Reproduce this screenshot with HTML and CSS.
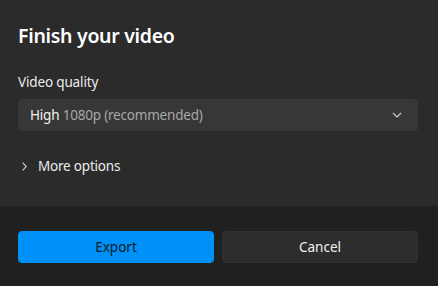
FILE: index.html
```html
<!DOCTYPE html>
<html lang="en">
<head>
    <meta charset="UTF-8">
    <title>Finish your video</title>
    <link rel="stylesheet" href="styles.css">
</head>
<body>
    <div class="dialog">
        <div class="content">
            <h1>Finish your video</h1>
            <label class="field-label">Video quality</label>
            <div class="select">
                <span><span class="strong">High</span> <span class="muted">1080p (recommended)</span></span>
                <svg class="chev-down" width="10" height="6" viewBox="0 0 10 6"><path d="M1 1l4 4 4-4" fill="none" stroke="#cfcfcf" stroke-width="1.1"/></svg>
            </div>
            <div class="more">
                <svg width="5" height="9" viewBox="0 0 5 9"><path d="M0.7 0.7l3.6 3.8-3.6 3.8" fill="none" stroke="#d6d6d6" stroke-width="1.1"/></svg>
                <span>More options</span>
            </div>
        </div>
        <div class="footer">
            <button class="btn primary">Export</button>
            <button class="btn">Cancel</button>
        </div>
    </div>
</body>
</html>
```

FILE: styles.css
```css
html, body {
    margin: 0;
    height: 100%;
}
body {
    background-color: #2b2b2b;
    font-family: "Noto Sans", "Open Sans", sans-serif;
    color: #ffffff;
}
.dialog {
    display: flex;
    flex-direction: column;
    height: 286px;
}
.content {
    height: 206px;
    padding: 0 20px 0 18px;
    box-sizing: border-box;
}
h1 {
    margin: 0;
    padding-top: 23px;
    font-size: 19.5px;
    font-weight: 600;
    line-height: 26px;
    letter-spacing: -0.3px;
}
.field-label {
    display: block;
    margin-top: 23px;
    font-size: 13.5px;
    line-height: 20px;
    letter-spacing: -0.15px;
    color: #ececec;
}
.select {
    display: flex;
    justify-content: space-between;
    align-items: center;
    height: 32px;
    margin-top: 7px;
    padding: 0 16px 0 12px;
    background-color: #373737;
    border-radius: 4px;
    font-size: 13.5px;
    letter-spacing: -0.2px;
}
.strong {
    color: #f2f2f2;
}
.muted {
    color: #a8a8a8;
}
.more {
    display: flex;
    align-items: center;
    gap: 11px;
    margin-top: 26px;
    padding-left: 4px;
    font-size: 13.5px;
    letter-spacing: -0.2px;
    color: #ececec;
}
.footer {
    flex: 1;
    display: flex;
    gap: 8px;
    padding: 25px 20px 0 18px;
    background-color: #202020;
}
.btn {
    flex: 1;
    height: 32px;
    border: 1px solid #303030;
    border-radius: 4px;
    background-color: #2d2d2d;
    color: #f0f0f0;
    font-family: inherit;
    font-size: 13.5px;
}
.btn.primary {
    background-color: #0091f8;
    border-color: #0091f8;
    color: #0b1a26;
}
```
